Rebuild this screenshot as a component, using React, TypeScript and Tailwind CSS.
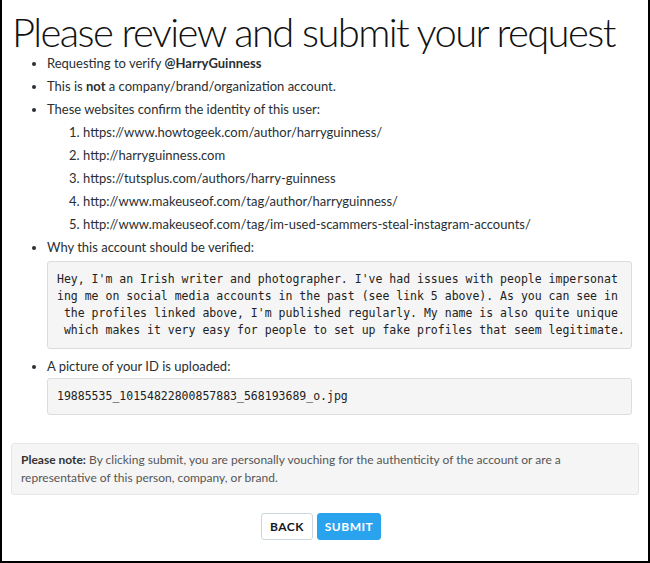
const LINKS = [
  'https://www.howtogeek.com/author/harryguinness/',
  'http://harryguinness.com',
  'https://tutsplus.com/authors/harry-guinness',
  'http://www.makeuseof.com/tag/author/harryguinness/',
  'http://www.makeuseof.com/tag/im-used-scammers-steal-instagram-accounts/',
];

const REASON = [
  "Hey, I'm an Irish writer and photographer. I've had issues with people impersonat",
  'ing me on social media accounts in the past (see link 5 above). As you can see in',
  " the profiles linked above, I'm published regularly. My name is also quite unique",
  ' which makes it very easy for people to set up fake profiles that seem legitimate.',
];

export default function App() {
  return (
    <div className="w-[650px] h-[563px] bg-white border-x-2 border-b-2 border-black text-[#292f33] font-['Lato',sans-serif] overflow-hidden">
      <h1 className="pl-[10px] pt-[12px] text-[40px] leading-[40px] font-light tracking-[-1.6px] whitespace-nowrap text-[#111]">
        Please review and submit your request
      </h1>

      <ul className="pl-[45px] pr-[16px] list-disc text-[13px] leading-[23px] marker:text-[#292f33]">
        <li>
          Requesting to verify <b className="font-bold">@HarryGuinness</b>
        </li>
        <li>
          This is <b className="font-bold">not</b> a company/brand/organization account.
        </li>
        <li>
          These websites confirm the identity of this user:
          <ol className="list-decimal pl-[36px]">
            {LINKS.map((l) => (
              <li key={l}>{l}</li>
            ))}
          </ol>
        </li>
        <li>
          Why this account should be verified:
          <div className="mt-[2px] bg-[#f5f5f5] border border-[#dcdcdc] rounded-[3px] px-[9px] py-[9px] font-['DejaVu_Sans_Mono',monospace] text-[11.5px] leading-[17px] text-[#222] whitespace-pre">
            {REASON.join('\n')}
          </div>
        </li>
        <li className="mt-[6px]">
          A picture of your ID is uploaded:
          <div className="bg-[#f5f5f5] border border-[#dcdcdc] rounded-[3px] px-[9px] py-[9px] font-['DejaVu_Sans_Mono',monospace] text-[11.5px] leading-[17px] text-[#222]">
            19885535_10154822800857883_568193689_o.jpg
          </div>
        </li>
      </ul>

      <div className="mx-[9px] mt-[28px] bg-[#f5f5f5] border border-[#e6e6e6] rounded-[3px] px-[9px] py-[7px] text-[12px] leading-[18px] text-[#555]">
        <b className="font-bold text-[#333]">Please note:</b> By clicking submit, you are personally vouching for the
        authenticity of the account or are a representative of this person, company, or brand.
      </div>

      <div className="flex justify-center gap-[4px] mt-[18px] pr-[8px]">
        <button className="h-[27px] w-[52px] bg-white border border-[#ccd6dd] rounded-[3px] text-[12px] font-bold tracking-[0.5px] text-[#14171a]">
          BACK
        </button>
        <button className="h-[27px] w-[64px] bg-[#2aa3ef] border border-[#2aa3ef] rounded-[3px] text-[12px] font-bold tracking-[0.5px] text-white">
          SUBMIT
        </button>
      </div>
    </div>
  );
}
